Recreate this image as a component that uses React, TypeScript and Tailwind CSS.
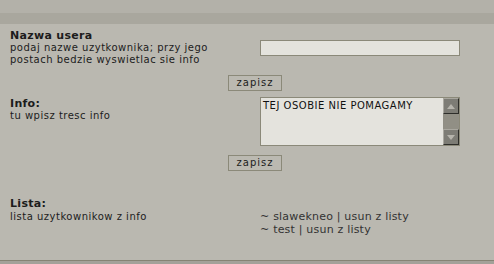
export default function App() {
  const wpisy = ['slawekneo', 'test']

  return (
    <div className="w-[494px] h-[264px] overflow-hidden bg-[#bab8b0] text-[10px] leading-[12px] tracking-[0.5px] text-[#1c1c1c] font-['DejaVu_Sans',sans-serif]">
      {/* gorne paski */}
      <div className="h-[13px] bg-[#b3b1a9]" />
      <div className="h-[11px] bg-[#a9a79e]" />

      <div className="h-[236px] pt-[6px]">
        {/* Nazwa usera */}
        <div className="flex">
          <div className="w-[260px] pl-[10px]">
            <div className="font-bold text-[11px] tracking-[0.3px]">Nazwa usera</div>
            <div>podaj nazwe uzytkownika; przy jego</div>
            <div>postach bedzie wyswietlac sie info</div>
          </div>
          <div className="pt-[10px]">
            <input
              type="text"
              className="block w-[200px] h-[16px] bg-[#e4e3dd] border border-[#8b8979] outline-none"
            />
          </div>
        </div>

        <div className="flex pl-[228px] mt-[9px]">
          <button className="w-[54px] h-[16px] border border-[#8b8979] bg-[#bbb9b1] text-[10px] leading-[14px] tracking-[1px] text-[#1c1c1c]">
            zapisz
          </button>
        </div>

        {/* Info */}
        <div className="flex mt-[6px]">
          <div className="w-[260px] pl-[10px] pt-[1px]">
            <div className="font-bold text-[11px] tracking-[0.3px]">Info:</div>
            <div>tu wpisz tresc info</div>
          </div>
          <div className="flex w-[200px] h-[49px] border border-[#8b8979] bg-[#e4e3dd]">
            <div className="flex-1 pl-[2px] pt-[2px] text-[#111]">TEJ OSOBIE NIE POMAGAMY</div>
            <div className="w-[16px] flex flex-col justify-between bg-[#918f85]">
              <div className="h-[16px] flex items-center justify-center bg-[#7d7c75] border-t border-l border-[#a9a79f] border-r border-b border-r-[#2e2e2a] border-b-[#2e2e2a]">
                <svg width="8" height="5" viewBox="0 0 8 5">
                  <path d="M0 5 L4 0 L8 5 Z" fill="#b6b4ac" />
                </svg>
              </div>
              <div className="h-[16px] flex items-center justify-center bg-[#7d7c75] border-t border-l border-[#a9a79f] border-r border-b border-r-[#2e2e2a] border-b-[#2e2e2a]">
                <svg width="8" height="5" viewBox="0 0 8 5">
                  <path d="M0 0 L4 5 L8 0 Z" fill="#b6b4ac" />
                </svg>
              </div>
            </div>
          </div>
        </div>

        <div className="flex pl-[228px] mt-[9px]">
          <button className="w-[54px] h-[16px] border border-[#8b8979] bg-[#bbb9b1] text-[10px] leading-[14px] tracking-[1px] text-[#1c1c1c]">
            zapisz
          </button>
        </div>

        {/* Lista */}
        <div className="flex mt-[26px] leading-[13px]">
          <div className="w-[260px] pl-[10px]">
            <div className="font-bold text-[11px] tracking-[0.3px]">Lista:</div>
            <div>lista uzytkownikow z info</div>
          </div>
          <div className="pt-[13px] text-[11px] tracking-[0.2px] text-[#333]">
            {wpisy.map((w) => (
              <div key={w}>
                ~ {w} | usun z listy
              </div>
            ))}
          </div>
        </div>
      </div>

      <div className="h-[4px] border-t border-[#858374] bg-[#a3a199]" />
    </div>
  )
}
